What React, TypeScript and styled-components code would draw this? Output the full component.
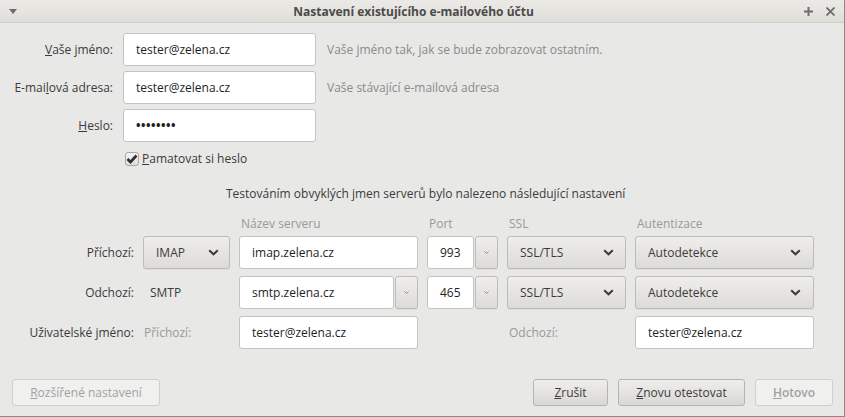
import React, { FC, ReactNode } from "react";
import styled, { createGlobalStyle } from "styled-components";

const GlobalStyle = createGlobalStyle`
  html, body {
    margin: 0;
    padding: 0;
    background: #e8e8e7;
  }
  body {
    font-family: "Open Sans", "Noto Sans", sans-serif;
    font-size: 12px;
    color: #3b3b3b;
  }
`;

const WindowFrame = styled.div`
  width: 845px;
  height: 417px;
  box-sizing: border-box;
  display: flex;
  flex-direction: column;
  background: #e8e8e7;
  border-right: 1px solid #8a8a88;
  border-bottom: 1px solid #8a8a88;
`;

const TitleBar = styled.div`
  height: 23px;
  flex: 0 0 23px;
  box-sizing: border-box;
  display: flex;
  align-items: center;
  padding: 0 9px;
  background: linear-gradient(#ebeae6, #dfded9);
  border-bottom: 1px solid #d2d1cc;
`;

const TitleText = styled.div`
  flex: 1;
  text-align: center;
  font-weight: 700;
  font-size: 12px;
  color: #4a4a4a;
  padding-left: 6px;
`;

const TitleIcons = styled.div`
  display: flex;
  gap: 13px;
  align-items: center;
  color: #6d6d6d;
`;

const Body = styled.div`
  flex: 1;
  display: flex;
  flex-direction: column;
  padding-top: 10px;
`;

const AccountGrid = styled.div`
  display: grid;
  grid-template-columns: 113px 193px auto;
  grid-auto-rows: 33px;
  column-gap: 10px;
  row-gap: 5px;
  align-items: center;
`;

const Label = styled.label<{ $muted?: boolean }>`
  text-align: right;
  white-space: nowrap;
  color: ${({ $muted }) => ($muted ? "#9a9a98" : "#3b3b3b")};
`;

const Hint = styled.span`
  color: #8b8b89;
  padding-left: 1px;
`;

const TextBox = styled.div`
  height: 33px;
  box-sizing: border-box;
  display: flex;
  align-items: center;
  padding-left: 12px;
  background: #ffffff;
  border: 1px solid #c4c4c1;
  border-radius: 3px;
  color: #1e1e1e;
  min-width: 0;
  flex: 1;
`;

const Dots = styled.span`
  font-size: 12px;
  letter-spacing: 0.5px;
  font-weight: 700;
`;

const CheckRow = styled.div`
  display: flex;
  align-items: center;
  gap: 3px;
  margin: 9px 0 0 125px;
  height: 15px;
`;

const CheckBox = styled.span`
  width: 14px;
  height: 14px;
  box-sizing: border-box;
  border: 1px solid #a8a8a6;
  border-radius: 3px;
  background: linear-gradient(#f4f4f3, #dededc);
  display: flex;
  align-items: center;
  justify-content: center;
`;

const Notice = styled.div`
  margin-top: 20px;
  padding-left: 226px;
  height: 16px;
  line-height: 16px;
`;

const ServerGrid = styled.div`
  margin-top: 11px;
  display: grid;
  grid-template-columns: 134px 87px 179px 71px 119px 179px;
  column-gap: 9px;
  grid-template-rows: 16px repeat(3, 33px);
  row-gap: 7px;
  align-items: center;
  & > :nth-child(-n + 6) {
    margin-bottom: -4px;
  }
`;

const ColHead = styled.span`
  color: #9a9a98;
  padding-left: 2px;
`;

const Plain = styled.span<{ $muted?: boolean; $indent?: number }>`
  padding-left: ${({ $indent }) => $indent ?? 1}px;
  color: ${({ $muted }) => ($muted ? "#9a9a98" : "#3b3b3b")};
`;

const Pair = styled.div`
  display: flex;
  gap: 1px;
  height: 33px;
`;

const Button = styled.button<{ $pad?: number }>`
  height: 33px;
  box-sizing: border-box;
  display: flex;
  align-items: center;
  justify-content: space-between;
  padding: 0 ${({ $pad }) => $pad ?? 12}px 0 12px;
  font: inherit;
  color: #3b3b3b;
  background: linear-gradient(#efeeec, #dcdbd8);
  border: 1px solid #bcbbb8;
  border-radius: 3px;
  box-shadow: 0 1px 0 rgba(0, 0, 0, 0.05);
`;

const SpinButton = styled(Button)`
  width: 23px;
  flex: 0 0 23px;
  padding: 0;
  justify-content: center;
`;

const Footer = styled.div`
  margin-top: auto;
  display: flex;
  align-items: center;
  gap: 10px;
  padding: 0 11px 10px 12px;
`;

const FooterButton = styled.button<{ $disabled?: boolean; $width: number; $bold?: boolean }>`
  width: ${({ $width }) => $width}px;
  height: 27px;
  box-sizing: border-box;
  font-family: "Open Sans", "Noto Sans", sans-serif;
  font-size: 12px;
  font-weight: ${({ $bold }) => ($bold ? 600 : 400)};
  color: ${({ $disabled }) => ($disabled ? "#a2a2a0" : "#3b3b3b")};
  background: ${({ $disabled }) =>
    $disabled ? "#f0f0ef" : "linear-gradient(#efeeec, #d9d8d5)"};
  border: 1px solid ${({ $disabled }) => ($disabled ? "#cfcfcc" : "#b5b4b1")};
  border-radius: 3px;
  padding: 0;
`;

const Spacer = styled.div`
  flex: 1;
`;

const Chevron: FC = () => (
  <svg width="11" height="7" viewBox="0 0 11 7">
    <path d="M1.2 1.2 L5.5 5.3 L9.8 1.2" fill="none" stroke="#3b3b3b" strokeWidth="2" />
  </svg>
);

const TinyChevron: FC = () => (
  <svg width="5" height="3" viewBox="0 0 5 3">
    <path d="M0.5 0.5 L2.5 2.5 L4.5 0.5" fill="none" stroke="#8a8a88" strokeWidth="1" />
  </svg>
);

const Select: FC<{ label: string; pad?: number }> = ({ label, pad }) => (
  <Button $pad={pad}>
    <span>{label}</span>
    <Chevron />
  </Button>
);

const Combo: FC<{ value: ReactNode }> = ({ value }) => (
  <Pair>
    <TextBox>{value}</TextBox>
    <SpinButton>
      <TinyChevron />
    </SpinButton>
  </Pair>
);

export default function App() {
  return (
    <>
      <GlobalStyle />
      <WindowFrame>
        <TitleBar>
          <svg width="8" height="5" viewBox="0 0 8 5">
            <path d="M0 0 H8 L4 5 Z" fill="#6d6d6d" />
          </svg>
          <TitleText>Nastavení existujícího e-mailového účtu</TitleText>
          <TitleIcons>
            <svg width="9" height="9" viewBox="0 0 9 9">
              <path d="M4.5 0 V9 M0 4.5 H9" stroke="#6d6d6d" strokeWidth="2" />
            </svg>
            <svg width="9" height="9" viewBox="0 0 9 9">
              <path d="M0.5 0.5 L8.5 8.5 M8.5 0.5 L0.5 8.5" stroke="#6d6d6d" strokeWidth="1.8" />
            </svg>
          </TitleIcons>
        </TitleBar>

        <Body>
          {/* account fields */}
          <AccountGrid>
            <Label>
              <u>V</u>aše jméno:
            </Label>
            <TextBox>tester@zelena.cz</TextBox>
            <Hint>Vaše jméno tak, jak se bude zobrazovat ostatním.</Hint>

            <Label>
              E-mai<u>l</u>ová adresa:
            </Label>
            <TextBox>tester@zelena.cz</TextBox>
            <Hint>Vaše stávající e-mailová adresa</Hint>

            <Label>
              <u>H</u>eslo:
            </Label>
            <TextBox>
              <Dots>••••••••</Dots>
            </TextBox>
            <span />
          </AccountGrid>

          <CheckRow>
            <CheckBox>
              <svg width="12" height="10" viewBox="0 0 12 10">
                <path d="M1.5 5 L4.5 8 L10.5 1.5" fill="none" stroke="#2e2e2e" strokeWidth="2.6" />
              </svg>
            </CheckBox>
            <span>
              <u>P</u>amatovat si heslo
            </span>
          </CheckRow>

          <Notice>Testováním obvyklých jmen serverů bylo nalezeno následující nastavení</Notice>

          {/* server settings */}
          <ServerGrid>
            <span />
            <span />
            <ColHead>Název serveru</ColHead>
            <ColHead>Port</ColHead>
            <ColHead>SSL</ColHead>
            <ColHead>Autentizace</ColHead>

            <Label>Příchozí:</Label>
            <Select label="IMAP" pad={10} />
            <TextBox>imap.zelena.cz</TextBox>
            <Combo value="993" />
            <Select label="SSL/TLS" pad={11} />
            <Select label="Autodetekce" pad={12} />

            <Label>Odchozí:</Label>
            <Plain $indent={7}>SMTP</Plain>
            <Combo value="smtp.zelena.cz" />
            <Combo value="465" />
            <Select label="SSL/TLS" pad={11} />
            <Select label="Autodetekce" pad={12} />

            <Label>Uživatelské jméno:</Label>
            <Plain $muted>Příchozí:</Plain>
            <TextBox>tester@zelena.cz</TextBox>
            <span />
            <Plain $muted $indent={2}>
              Odchozí:
            </Plain>
            <TextBox>tester@zelena.cz</TextBox>
          </ServerGrid>

          <Footer>
            <FooterButton $disabled $width={148}>
              <u>R</u>ozšířené nastavení
            </FooterButton>
            <Spacer />
            <FooterButton $width={75}>
              <u>Z</u>rušit
            </FooterButton>
            <FooterButton $width={127}>
              <u>Z</u>novu otestovat
            </FooterButton>
            <FooterButton $disabled $bold $width={78}>
              <u>H</u>otovo
            </FooterButton>
          </Footer>
        </Body>
      </WindowFrame>
    </>
  );
}
